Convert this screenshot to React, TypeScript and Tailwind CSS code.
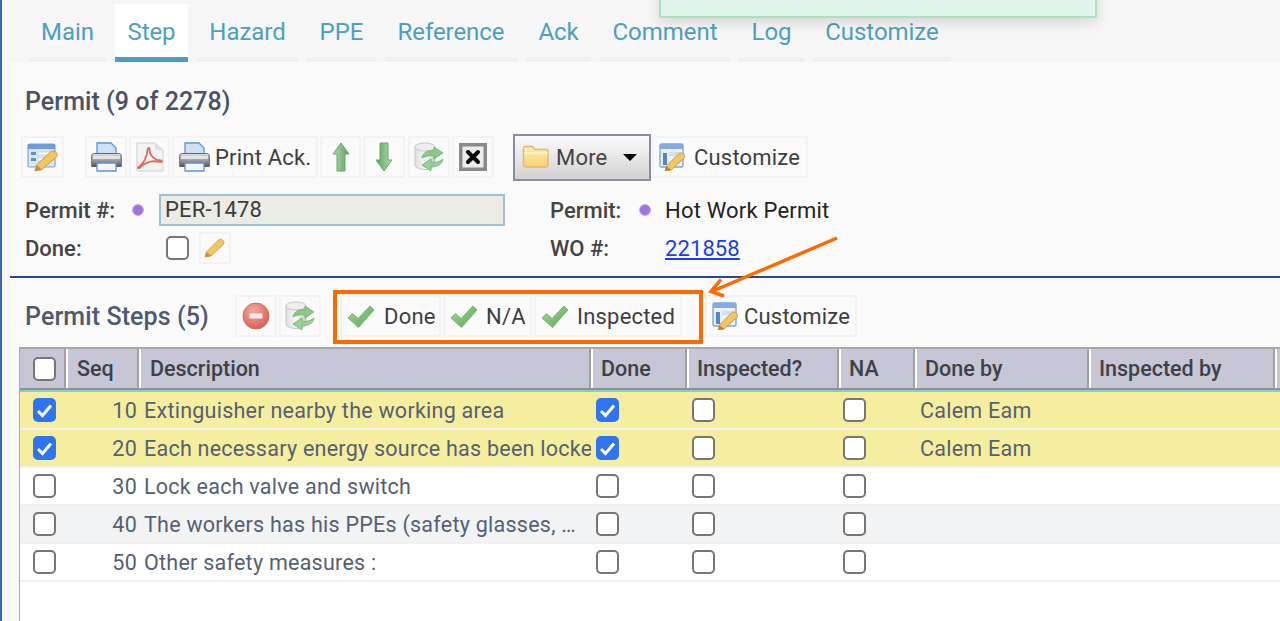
import React from "react";

const FONT = "font-['Roboto','Liberation_Sans',sans-serif]";

function FormIcon() {
  return (
    <svg width="32" height="30" viewBox="0 0 32 30">
      <rect x="1" y="2" width="27" height="23" rx="1.5" fill="#dbe7f7" stroke="#7fa6dc" strokeWidth="1.2" />
      <rect x="1" y="2" width="27" height="5" fill="#6f9ade" />
      <rect x="4" y="10" width="5" height="3" fill="#5f8fd6" />
      <rect x="4" y="16" width="5" height="3" fill="#5f8fd6" />
      <rect x="11" y="10" width="13" height="3" fill="#fff" stroke="#a9c3e6" strokeWidth=".6" />
      <rect x="11" y="16" width="9" height="3" fill="#fff" stroke="#a9c3e6" strokeWidth=".6" />
      <path d="M8 29l1.5-6L24 9.5c1-1 3.5-.8 5 .7s1.6 3.6.6 4.6L15 27.5z" fill="#f1c75d" stroke="#cf9a3b" strokeWidth="1" />
      <path d="M8 29l1.5-6 5.5 4.5z" fill="#c98d4f" />
    </svg>
  );
}

function CustomizeIcon() {
  return (
    <svg width="28" height="28" viewBox="0 0 28 28">
      <rect x="1" y="1" width="23" height="23" rx="1.5" fill="#eaf1fb" stroke="#7fa6dc" strokeWidth="1.4" />
      <rect x="1" y="1" width="23" height="5" fill="#84aae2" />
      <rect x="4" y="10" width="4" height="12" fill="#4f86d2" />
      <rect x="10" y="9" width="11" height="4" fill="#cfdff4" />
      <path d="M6 28l1.5-5L20 10.5c1-1 3-.8 4.4.6s1.5 3.2.6 4.2L12 27z" fill="#f1c75d" stroke="#cf9a3b" strokeWidth="1" />
      <path d="M6 28l1.5-5 4.5 4z" fill="#b9824a" />
    </svg>
  );
}

function PrinterIcon() {
  return (
    <svg width="31" height="30" viewBox="0 0 31 30">
      <defs>
        <linearGradient id="pr" x1="0" y1="0" x2="0" y2="1">
          <stop offset="0" stopColor="#e3e3e3" />
          <stop offset=".55" stopColor="#9a9a9a" />
          <stop offset="1" stopColor="#555" />
        </linearGradient>
      </defs>
      <path d="M6 13V1h14l5 5v7z" fill="#cfe0f6" stroke="#5d93dc" strokeWidth="1.3" />
      <path d="M.7 14c0-1.500 1-2.500 2.500-2.500h24.600c1.500 0 2.500 1 2.500 2.500v10.500H.7z" fill="url(#pr)" stroke="#666" strokeWidth="1" />
      <rect x="2" y="14" width="27" height="3" fill="#f4f4f4" opacity=".7" />
      <path d="M6 21h19v8H6z" fill="#f3f6fb" stroke="#5d93dc" strokeWidth="1.3" />
    </svg>
  );
}

function PdfIcon() {
  return (
    <svg width="30" height="30" viewBox="0 0 30 30">
      <path d="M2 1h18l8 7v21H2z" fill="#f3f3f3" stroke="#cfcfcf" strokeWidth="1" />
      <path d="M20 1v7h8z" fill="#dedede" />
      <path
        d="M3.500 25c4-2 8.500-9 9-17 .2-3 2-3 2-.5 0 6 5 10.500 11 11 2 .2 1.500 2-.5 1.500-6-1.500-14-.5-20 5.500-1.500 1.500-3 0-1.500-.5z"
        fill="none"
        stroke="#e26a62"
        strokeWidth="1.800"
      />
    </svg>
  );
}

function ArrowIcon({ down }: { down?: boolean }) {
  return (
    <svg width="18" height="30" viewBox="0 0 18 30" className={down ? "rotate-180" : ""}>
      <defs>
        <linearGradient id={down ? "ad" : "au"} x1="0" y1="0" x2="1" y2="0">
          <stop offset="0" stopColor="#b5ddb0" />
          <stop offset="1" stopColor="#5a9f5c" />
        </linearGradient>
      </defs>
      <path d="M9 1l8 11h-4v17H5V12H1z" fill={`url(#${down ? "ad" : "au"})`} stroke="#6aa86b" strokeWidth="1" />
    </svg>
  );
}

function RefreshIcon() {
  return (
    <svg width="30" height="30" viewBox="0 0 30 30">
      <defs>
        <linearGradient id="cy" x1="0" y1="0" x2="1" y2="0">
          <stop offset="0" stopColor="#e0e0e0" />
          <stop offset=".5" stopColor="#f8f8f8" />
          <stop offset="1" stopColor="#cacaca" />
        </linearGradient>
      </defs>
      <path d="M1 5v18c0 2.500 5 4.500 10 4.500s10-2 10-4.500V5z" fill="url(#cy)" stroke="#c6c6c6" strokeWidth="1" />
      <ellipse cx="11" cy="5" rx="10" ry="4" fill="#eeeeee" stroke="#c6c6c6" strokeWidth="1" />
      <path d="M8 16c1-6 6-8 12-7V5l9 6-9 6v-3c-4-1-8 0-12 2z" fill="#8cc886" stroke="#62a863" strokeWidth=".7" />
      <path d="M29 17c-1 6-6 8-12 7v5l-9-6 9-6v3c4 1 8 0 12-3z" fill="#9ad294" stroke="#62a863" strokeWidth=".7" />
    </svg>
  );
}

function CloseIcon() {
  return (
    <svg width="28" height="28" viewBox="0 0 28 28">
      <rect x="1.750" y="1.750" width="24.500" height="24.500" fill="#ececec" stroke="#8a8a8a" strokeWidth="3.500" />
      <path d="M9 9l10 10M19 9L9 19" stroke="#0a0a0a" strokeWidth="4" strokeLinecap="round" />
    </svg>
  );
}

function FolderIcon() {
  return (
    <svg width="28" height="24" viewBox="0 0 28 24">
      <defs>
        <linearGradient id="fo" x1="0" y1="0" x2="0" y2="1">
          <stop offset="0" stopColor="#fdf0b8" />
          <stop offset="1" stopColor="#f5cf74" />
        </linearGradient>
      </defs>
      <path d="M1.500 3.500c0-1 .8-2 2-2h7l2.500 3h11c1 0 2 1 2 2V20c0 1-1 2-2 2h-20.500c-1 0-2-1-2-2z" fill="url(#fo)" stroke="#e9b765" strokeWidth="1.400" />
      <path d="M2 8h24" stroke="#fff6cf" strokeWidth="1.400" />
    </svg>
  );
}

function PencilIcon() {
  return (
    <svg width="24" height="22" viewBox="0 0 24 22">
      <path d="M2 20l1.500-5L15.500 3c1-1 3-1 4.300.3s1.400 3.200.4 4.200L8 19z" fill="#f0c862" stroke="#d9a248" strokeWidth="1" />
      <path d="M2 20l1.500-5L8 19z" fill="#c58f55" />
    </svg>
  );
}

function MinusIcon() {
  return (
    <svg width="28" height="28" viewBox="0 0 28 28">
      <defs>
        <radialGradient id="mi" cx=".4" cy=".3" r=".8">
          <stop offset="0" stopColor="#f3a79f" />
          <stop offset="1" stopColor="#d9584d" />
        </radialGradient>
      </defs>
      <circle cx="14" cy="14" r="13" fill="url(#mi)" stroke="#cf6b62" strokeWidth="1" />
      <rect x="7.500" y="11.500" width="13" height="5" rx="1" fill="#fbeeee" />
    </svg>
  );
}

function CheckIcon() {
  return (
    <svg width="28" height="24" viewBox="0 0 28 24">
      <defs>
        <linearGradient id="ck" x1="0" y1="0" x2="1" y2="1">
          <stop offset="0" stopColor="#a5d79a" />
          <stop offset="1" stopColor="#5aa657" />
        </linearGradient>
      </defs>
      <path d="M1 14l4.500-4.500 5.500 5L23 2l4 4-15.500 17.500z" fill="url(#ck)" stroke="#7cb878" strokeWidth="1" strokeLinejoin="round" />
    </svg>
  );
}

function Btn({ w, children, pad }: { w: string; children: React.ReactNode; pad?: boolean }) {
  return (
    <div
      className={`${w} h-[42px] shrink-0 border-2 border-[#f3f3f3] bg-[#fafafa] flex items-center [&_svg]:blur-[0.4px] ${
        pad ? "pl-[5px] justify-start" : "justify-center"
      }`}
    >
      {children}
    </div>
  );
}

function Dot() {
  return (
    <span className="block w-[12px] h-[12px] shrink-0 rounded-full bg-[#9f74dc] border border-[#c9b2ec]" />
  );
}

function Box({ checked }: { checked?: boolean }) {
  return checked ? (
    <span className="flex w-[23px] h-[24px] shrink-0 items-center justify-center rounded-[5px] bg-[#2f74f0]">
      <svg width="17" height="15" viewBox="0 0 17 15">
        <path d="M2 8l4.500 4.500L15 2.500" fill="none" stroke="#fff" strokeWidth="3" />
      </svg>
    </span>
  ) : (
    <span className="block w-[23px] h-[24px] shrink-0 rounded-[5px] border-2 border-[#767676] bg-white" />
  );
}

const tabs: [string, string][] = [
  ["Main", "w-[77px]"],
  ["Step", "w-[73px]"],
  ["Hazard", "w-[101px]"],
  ["PPE", "w-[69px]"],
  ["Reference", "w-[132px]"],
  ["Ack", "w-[65px]"],
  ["Comment", "w-[130px]"],
  ["Log", "w-[65px]"],
  ["Customize", "w-[138px]"],
];

const headers: [string, string][] = [
  ["", "w-[46px] pl-[13px]"],
  ["Seq", "w-[73px] pl-[11px] shadow-[inset_2px_0_0_#fff]"],
  ["Description", "w-[452px] pl-[11px] shadow-[inset_2px_0_0_#fff]"],
  ["Done", "w-[96px] pl-[10px] shadow-[inset_2px_0_0_#fff]"],
  ["Inspected?", "w-[152px] pl-[10px] shadow-[inset_2px_0_0_#fff]"],
  ["NA", "w-[76px] pl-[10px] shadow-[inset_2px_0_0_#fff]"],
  ["Done by", "w-[174px] pl-[10px] shadow-[inset_2px_0_0_#fff]"],
  ["Inspected by", "w-[186px] pl-[10px] shadow-[inset_2px_0_0_#fff]"],
];

const rows = [
  { seq: "10", text: "Extinguisher nearby the working area", sel: true, done: true, by: "Calem Eam", bg: "bg-[#f5ee9e]" },
  { seq: "20", text: "Each necessary energy source has been locked out", sel: true, done: true, by: "Calem Eam", bg: "bg-[#f5ee9e]" },
  { seq: "30", text: "Lock each valve and switch", sel: false, done: false, by: "", bg: "bg-white" },
  { seq: "40", text: "The workers has his PPEs (safety glasses, …", sel: false, done: false, by: "", bg: "bg-[#f1f3f5]" },
  { seq: "50", text: "Other safety measures :", sel: false, done: false, by: "", bg: "bg-white" },
];

const LABEL = "shrink-0 font-medium text-[#444] tracking-normal text-[22px]";

export default function App() {
  return (
    <div className={`${FONT} relative w-[1280px] h-[621px] overflow-hidden border-l-2 border-[#3f66b5] bg-[#f6f6f6] text-[21.5px] tracking-[0.25px]`}>
      {/* toast */}
      <div className="absolute left-[657px] top-[-10px] w-[438px] h-[28px] rounded-[2px] border-2 border-[#a9e2bd] bg-[#e2f4ea] shadow-[0_4px_14px_rgba(0,0,0,0.14)]" />

      {/* tabs */}
      <div className="flex h-[62px] pt-[4px] pl-[27px] gap-[9px]">
        {tabs.map(([t, w]) => {
          const active = t === "Step";
          return (
            <div
              key={t}
              className={`${w} h-[58px] flex items-center justify-center pt-[3px] border-b-[5px] text-[#4d9fc0] text-[24px] tracking-[-0.05px] ${
                active ? "bg-white border-[#4a9fc2]" : "border-[#f0f0f0]"
              }`}
            >
              {t}
            </div>
          );
        })}
      </div>

      {/* content */}
      <div className="ml-[8px] h-[559px] bg-[#fafafa]">
        <div className="h-[74px] pt-[25px] pl-[15px] text-[25px] leading-[30px] font-medium text-[#4a5263] tracking-[0.05px]">
          Permit (9 of 2278)
        </div>

        <div className="flex items-center h-[42px] pl-[11px] text-[#3f3f3f] text-[22px] tracking-[0.2px]">
          <Btn w="w-[43px]"><FormIcon /></Btn>
          <div className="ml-[21px]"><Btn w="w-[42px]"><PrinterIcon /></Btn></div>
          <div className="ml-[2px]"><Btn w="w-[41px]"><PdfIcon /></Btn></div>
          <div className="ml-[2px]">
            <Btn w="w-[146px]" pad>
              <PrinterIcon />
              <span className="ml-[5px]">Print Ack.</span>
            </Btn>
          </div>
          <div className="ml-[2px]"><Btn w="w-[41px]"><ArrowIcon /></Btn></div>
          <div className="ml-[2px]"><Btn w="w-[42px]"><ArrowIcon down /></Btn></div>
          <div className="ml-[3px]"><Btn w="w-[42px]"><RefreshIcon /></Btn></div>
          <div className="ml-[2px]"><Btn w="w-[42px]"><CloseIcon /></Btn></div>
          <div className="ml-[19px] w-[138px] h-[47px] shrink-0 flex items-center pl-[7px] border-2 border-[#8b8ba6] bg-gradient-to-b from-[#fbfbfb] to-[#d2d2d2]">
            <FolderIcon />
            <span className="ml-[6px] text-[#444]">More</span>
            <span className="ml-[16px] w-0 h-0 border-x-[7.5px] border-x-transparent border-t-[7px] border-t-black" />
          </div>
          <div className="ml-[1px]">
            <Btn w="w-[156px]" pad>
              <CustomizeIcon />
              <span className="ml-[7px]">Customize</span>
            </Btn>
          </div>
        </div>

        <div className="mt-[16px] h-[32px] flex items-center pl-[15px] text-[#222] text-[22px] tracking-[0.2px]">
          <span className={`w-[107px] ${LABEL}`}>Permit #:</span>
          <Dot />
          <div className="ml-[15px] w-[346px] h-[32px] shrink-0 border-2 border-[#9dc0d8] bg-[#ebece6] pl-[4px] leading-[27px] text-[#3c3c3c]">
            PER-1478
          </div>
          <span className={`ml-[45px] w-[89px] ${LABEL}`}>Permit:</span>
          <Dot />
          <span className="ml-[14px]">Hot Work Permit</span>
        </div>

        <div className="mt-[6px] h-[32px] flex items-center pl-[15px]">
          <span className={`w-[141px] ${LABEL}`}>Done:</span>
          <Box />
          <div className="ml-[10px] w-[32px] h-[32px] shrink-0 flex items-center justify-center border-2 border-[#f3f3f3]">
            <PencilIcon />
          </div>
          <span className={`ml-[319px] w-[115px] ${LABEL}`}>WO #:</span>
          <span className="text-[#1a3df0] underline text-[22px] tracking-[0.1px]">221858</span>
        </div>

        <div className="mt-[12px] h-[2px] bg-[#27478f]" />

        {/* steps toolbar */}
        <div className="h-[69px] pt-[17px] pl-[15px] flex items-start text-[#3f3f3f] text-[22px] tracking-[0.2px]">
          <div className="w-[210px] h-[42px] shrink-0 pt-[2px] flex items-center font-medium text-[25px] text-[#4e5a6e] tracking-[0.1px]">
            Permit Steps (5)
          </div>
          <Btn w="w-[42px]"><MinusIcon /></Btn>
          <div className="ml-[2px]"><Btn w="w-[42px]"><RefreshIcon /></Btn></div>
          <div className="ml-[12px] -mt-[5px] w-[370px] h-[54px] shrink-0 border-4 border-[#ff6a00] pt-[1px] pl-[3px] flex gap-[2px]">
            <Btn w="w-[101px]" pad><CheckIcon /><span className="ml-[9px]">Done</span></Btn>
            <Btn w="w-[89px]" pad><CheckIcon /><span className="ml-[8px]">N/A</span></Btn>
            <Btn w="w-[148px]" pad><CheckIcon /><span className="ml-[8px]">Inspected</span></Btn>
          </div>
          <div className="ml-[2px]">
            <Btn w="w-[152px]" pad><CustomizeIcon /><span className="ml-[4px]">Customize</span></Btn>
          </div>
        </div>

        {/* table */}
        <div className="ml-[9px] h-[274px] border-l border-[#a8a8a8] bg-white">
          <div className="flex h-[45px] border-t-2 border-[#a8a8a8] bg-[#c6c6d6] shadow-[inset_0_-3px_0_#7fd0d4]">
            {headers.map(([h, w], i) => (
              <div
                key={i}
                className={`${w} h-[41px] shrink-0 flex items-center border-b-2 border-b-[#8f8f8f] border-r-2 border-r-[#a0a0a0] overflow-hidden font-medium text-[#3e4149] text-[21.5px] tracking-normal`}
              >
                {i === 0 ? <Box /> : <span className="pt-[2px]">{h}</span>}
              </div>
            ))}
            <div className="flex-1 h-[41px] border-b-2 border-b-[#8f8f8f] shadow-[inset_2px_0_0_#fff]" />
          </div>
          {rows.map((r) => (
            <div key={r.seq} className={`${r.bg} h-[38px] flex items-center border-b-2 border-[#f0f0f0] text-[#566072] whitespace-nowrap`}>
              <div className="w-[45px] shrink-0 pl-[13px]"><Box checked={r.sel} /></div>
              <div className="w-[72px] shrink-0 pt-[2px] text-right">{r.seq}</div>
              <div className="w-[454px] shrink-0 pt-[2px] pl-[7px] overflow-hidden">{r.text}</div>
              <div className="w-[96px] shrink-0 pl-[5px]"><Box checked={r.done} /></div>
              <div className="w-[152px] shrink-0 pl-[5px]"><Box /></div>
              <div className="w-[76px] shrink-0 pl-[4px]"><Box /></div>
              <div className="w-[174px] shrink-0 pt-[2px] pl-[5px]">{r.by}</div>
              <div className="w-[186px] shrink-0" />
              <div className="pl-[4px] pt-[2px]">{r.by ? "C" : ""}</div>
            </div>
          ))}
        </div>
      </div>

      {/* annotation arrow */}
      <svg className="absolute left-[-2px] top-0 pointer-events-none" width="1280" height="621" viewBox="0 0 1280 621" fill="none">
        <path d="M837 238L713 291" stroke="#ff6a00" strokeWidth="3.500" />
        <path d="M721 279.500L711 291.500L724 296" stroke="#ff6a00" strokeWidth="3.500" />
      </svg>
    </div>
  );
}
